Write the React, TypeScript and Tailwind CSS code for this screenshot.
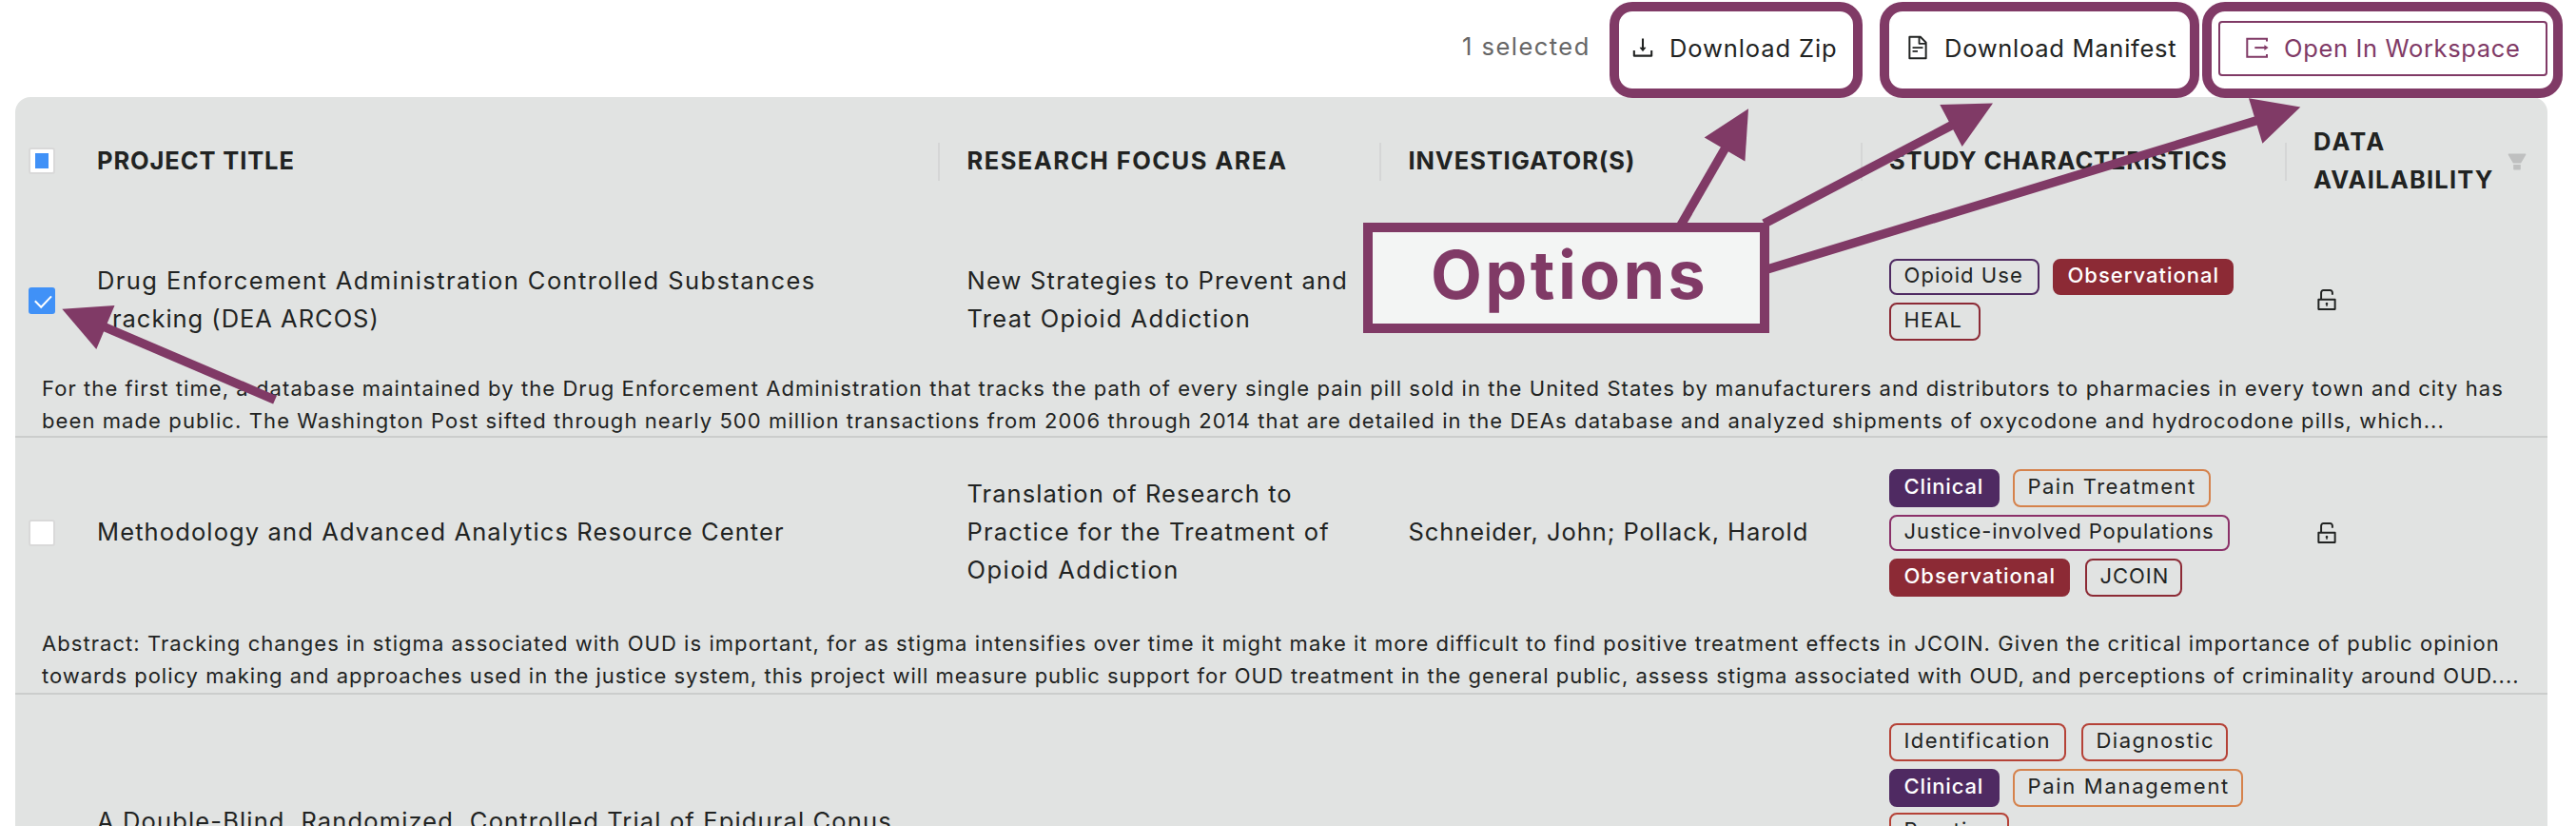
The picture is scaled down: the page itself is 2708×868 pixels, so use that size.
import type { ReactNode } from 'react';
import {
  AiFillFilter,
  AiOutlineDownload,
  AiOutlineFileText,
  AiOutlineUnlock,
} from 'react-icons/ai';

type CheckState = 'empty' | 'checked' | 'partial';

function Checkbox({ state }: { state: CheckState }) {
  if (state === 'checked') {
    return (
      <span className="flex size-7 items-center justify-center rounded-[3px] bg-[#4091f7]">
        <svg viewBox="0 0 28 28" className="size-7" fill="none" stroke="#fff" strokeWidth="2">
          <path d="M6.8 14.2l6.4 6.6L24 9.4" />
        </svg>
      </span>
    );
  }
  return (
    <span className="flex size-7 items-center justify-center rounded-[3px] border-2 border-[#d9d9d9] bg-white">
      {state === 'partial' && <span className="h-4 w-3.5 bg-[#4091f7]" />}
    </span>
  );
}

function ExportIcon() {
  return (
    <svg viewBox="0 0 28 28" className="size-7 shrink-0" fill="none" stroke="currentColor" strokeWidth="2">
      <path d="M24 6.6V3.8H3.3v19H24V20" />
      <path d="M11.3 13.1H22" />
      <path d="M21.4 10.2l4.2 2.9l-4.2 2.9z" fill="currentColor" stroke="none" />
    </svg>
  );
}

function HeaderCell({ children, className = '' }: { children: ReactNode; className?: string }) {
  return <div className={`flex items-center font-bold ${className}`}>{children}</div>;
}

function Divider() {
  return <span className="h-10 w-0.5 shrink-0 bg-[#d5d6d6]" />;
}

function Chip({ children, className }: { children: ReactNode; className: string }) {
  return (
    <span className={`flex items-center rounded-lg border-2 pb-1 pl-[13.5px] ${className}`}>
      {children}
    </span>
  );
}

function ChipRow({ children, className }: { children: ReactNode; className: string }) {
  return <div className={`flex shrink-0 text-[22px] leading-none ${className}`}>{children}</div>;
}

const COLUMNS = 'grid grid-cols-[70px_902px_464px_506px_446px_274px] items-center';

export default function App() {
  return (
    <div className="relative h-[868px] w-[2708px] overflow-hidden whitespace-nowrap bg-white font-['Inter','Open_Sans',sans-serif] text-[25.5px] leading-10 text-[#212322]">
      {/* Toolbar */}
      <div className="grid h-[102px] grid-cols-[176px_289px_330px_346px] items-center justify-end pr-[30px]">
        <span className="pb-1 tracking-[1.47px] text-[#666666]">1 selected</span>
        <button className="flex items-center gap-3.5 pb-[3px]">
          <AiOutlineDownload className="size-7" />
          <span className="pt-0.5 tracking-[0.9px]">Download Zip</span>
        </button>
        <button className="flex items-center gap-3.5 pb-[3px]">
          <AiOutlineFileText className="size-7" />
          <span className="pt-0.5 tracking-[0.73px]">Download Manifest</span>
        </button>
        <button className="flex h-[58px] items-center gap-3.5 rounded border-2 border-[#803a66] pl-[25px] text-[#803a66]">
          <ExportIcon />
          <span className="tracking-[0.65px]">Open In Workspace</span>
        </button>
      </div>

      {/* Table */}
      <div className="ml-4 h-[766px] w-[2662px] overflow-hidden rounded-t-2xl bg-[#e1e3e2]">
        <div className={`${COLUMNS} h-[136px]`}>
          <div className="pb-0.5 pl-3.5">
            <Checkbox state="partial" />
          </div>
          <HeaderCell className="justify-between pl-4">
            <span className="pb-[3px] tracking-[0.88px]">PROJECT TITLE</span>
            <Divider />
          </HeaderCell>
          <HeaderCell className="justify-between pl-[28.5px]">
            <span className="pb-[3px] tracking-[1.45px]">RESEARCH FOCUS AREA</span>
            <Divider />
          </HeaderCell>
          <HeaderCell className="justify-between pl-[28.5px]">
            <span className="pb-[3px] tracking-[0.88px]">INVESTIGATOR(S)</span>
            <Divider />
          </HeaderCell>
          <HeaderCell className="justify-between pl-7">
            <span className="pb-[3px] tracking-[0.85px]">STUDY CHARACTERISTICS</span>
            <Divider />
          </HeaderCell>
          <HeaderCell className="justify-between pl-7 pr-5">
            <span className="flex flex-col pb-[3px]">
              <span className="tracking-[2.1px]">DATA</span>
              <span className="tracking-[1.2px]">AVAILABILITY</span>
            </span>
            <AiFillFilter className="size-6 text-[#bfc0c0]" />
          </HeaderCell>
        </div>

        {/* DEA ARCOS */}
        <div className="border-b-2 border-[#cbcdcc]">
          <div className={`${COLUMNS} h-[153px]`}>
            <div className="pl-3.5 pt-[3px]">
              <Checkbox state="checked" />
            </div>
            <div className="flex flex-col pl-4">
              <span className="tracking-[1.42px]">
                Drug Enforcement Administration Controlled Substances
              </span>
              <span className="tracking-[0.98px]">Tracking (DEA ARCOS)</span>
            </div>
            <div className="flex flex-col pl-[28.5px]">
              <span className="tracking-[1.22px]">New Strategies to Prevent and</span>
              <span className="tracking-[1.34px]">Treat Opioid Addiction</span>
            </div>
            <div />
            <div className="flex flex-col gap-2 pl-7">
              <ChipRow className="h-[38px] gap-3.5">
                <Chip className="w-[158px] border-[#4f2a62] tracking-[1.08px]">Opioid Use</Chip>
                <Chip className="w-[190px] border-[#8c2a35] bg-[#8c2a35] font-medium tracking-[0.98px] text-white">
                  Observational
                </Chip>
              </ChipRow>
              <ChipRow className="h-10">
                <Chip className="w-24 border-[#8c2a35] tracking-[1.1px]">HEAL</Chip>
              </ChipRow>
            </div>
            <div className="pl-7">
              <AiOutlineUnlock className="size-7" />
            </div>
          </div>
          <div className="flex h-[67px] flex-col pl-7 text-[22px] leading-[34px]">
            <span className="tracking-[1.073px]">
              For the first time, a database maintained by the Drug Enforcement Administration that tracks the path of every single pain pill sold in the United States by manufacturers and distributors to pharmacies in every town and city has
            </span>
            <span className="tracking-[1.09px]">
              been made public. The Washington Post sifted through nearly 500 million transactions from 2006 through 2014 that are detailed in the DEAs database and analyzed shipments of oxycodone and hydrocodone pills, which...
            </span>
          </div>
        </div>

        {/* Methodology center */}
        <div className="border-b-2 border-[#cbcdcc]">
          <div className={`${COLUMNS} h-[199px]`}>
            <div className="pl-3.5">
              <Checkbox state="empty" />
            </div>
            <div className="pb-0.5 pl-4 tracking-[1.12px]">
              Methodology and Advanced Analytics Resource Center
            </div>
            <div className="flex flex-col pb-0.5 pl-[28.5px]">
              <span className="tracking-[1.04px]">Translation of Research to</span>
              <span className="tracking-[1.2px]">Practice for the Treatment of</span>
              <span className="tracking-[1.46px]">Opioid Addiction</span>
            </div>
            <div className="pb-0.5 pl-[28.5px] tracking-[0.94px]">Schneider, John; Pollack, Harold</div>
            <div className="flex flex-col gap-2 pl-7">
              <ChipRow className="h-10 gap-3.5">
                <Chip className="w-[116px] border-[#4f2a62] bg-[#4f2a62] font-medium tracking-[0.85px] text-white">
                  Clinical
                </Chip>
                <Chip className="w-[208px] border-[#d5824c] tracking-[1.47px]">Pain Treatment</Chip>
              </ChipRow>
              <ChipRow className="h-[38px]">
                <Chip className="w-[358px] border-[#8b3169] tracking-[0.94px]">
                  Justice-involved Populations
                </Chip>
              </ChipRow>
              <ChipRow className="h-10 gap-4">
                <Chip className="w-[190px] border-[#8c2a35] bg-[#8c2a35] font-medium tracking-[0.98px] text-white">
                  Observational
                </Chip>
                <Chip className="w-[102px] border-[#8c2a35] tracking-[0.95px]">JCOIN</Chip>
              </ChipRow>
            </div>
            <div className="pl-7">
              <AiOutlineUnlock className="size-7" />
            </div>
          </div>
          <div className="flex h-[69px] flex-col pl-7 text-[22px] leading-[34px]">
            <span className="tracking-[1.053px]">
              Abstract: Tracking changes in stigma associated with OUD is important, for as stigma intensifies over time it might make it more difficult to find positive treatment effects in JCOIN. Given the critical importance of public opinion
            </span>
            <span className="tracking-[0.988px]">
              towards policy making and approaches used in the justice system, this project will measure public support for OUD treatment in the general public, assess stigma associated with OUD, and perceptions of criminality around OUD....
            </span>
          </div>
        </div>

        {/* Epidural trial, cut off by the window */}
        <div className={`${COLUMNS} items-start`}>
          <div />
          <div className="pl-4 pt-[113px] tracking-[1.14px]">
            A Double-Blind, Randomized, Controlled Trial of Epidural Conus
          </div>
          <div />
          <div />
          <div className="flex flex-col pl-7 pt-[30px]">
            <ChipRow className="mb-2 h-10 gap-4">
              <Chip className="w-[186px] border-[#b54237] tracking-[1.39px]">Identification</Chip>
              <Chip className="w-[154px] border-[#b54237] tracking-[1.47px]">Diagnostic</Chip>
            </ChipRow>
            <ChipRow className="mb-1.5 h-10 gap-3.5">
              <Chip className="w-[116px] border-[#4f2a62] bg-[#4f2a62] font-medium tracking-[0.85px] text-white">
                Clinical
              </Chip>
              <Chip className="w-[242px] border-[#d5824c] tracking-[1.69px]">Pain Management</Chip>
            </ChipRow>
            <ChipRow className="h-10">
              <Chip className="w-[126px] border-[#b54237] tracking-[1.2px]">Practice</Chip>
            </ChipRow>
          </div>
          <div />
        </div>
      </div>

      {/* Callouts laid over the page */}
      <div className="absolute left-[1692px] top-0.5 h-[101px] w-[266px] rounded-3xl border-10 border-[#803a66]" />
      <div className="absolute left-[1976px] top-0.5 h-[101px] w-[336px] rounded-3xl border-10 border-[#803a66]" />
      <div className="absolute left-[2315px] top-0.5 h-[101px] w-[379px] rounded-3xl border-10 border-[#803a66]" />
      <svg
        viewBox="0 0 2708 868"
        className="absolute inset-0 h-[868px] w-[2708px]"
        fill="#803a66"
        stroke="#803a66"
      >
        <g stroke="none">
          <path d="M65.3 324.7L120.5 321L101.3 367z" />
          <path d="M1838 114.2L1791.7 144.5L1834.4 169.5z" />
          <path d="M2095 108.6L2039.3 110L2062.7 154z" />
          <path d="M2418.3 112.6L2364 103.2L2378.4 150.7z" />
        </g>
        <g strokeWidth="9.4">
          <path d="M109 343.2L289 420.2" />
          <path d="M1814 155L1765 240" />
          <path d="M2053 131L1854.5 235" />
          <path d="M2373 126.5L1857 283.2" />
        </g>
      </svg>
      <div className="absolute left-[1433px] top-[234px] flex h-[116px] w-[427px] items-center border-10 border-[#803a66] bg-[#f3f5f4] pb-[7px] pl-[61px] text-[70px] font-bold leading-none tracking-[3.4px] text-[#803a66]">
        Options
      </div>
    </div>
  );
}
